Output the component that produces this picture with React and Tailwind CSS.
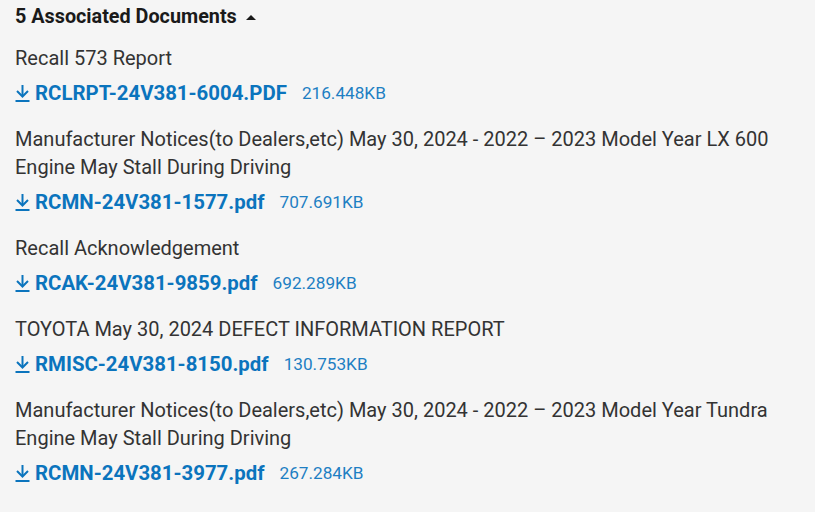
import React from "react";

const docs = [
  { title: "Recall 573 Report", file: "RCLRPT-24V381-6004.PDF", size: "216.448KB" },
  { title: "Manufacturer Notices(to Dealers,etc) May 30, 2024 - 2022 – 2023 Model Year LX 600 Engine May Stall During Driving", file: "RCMN-24V381-1577.pdf", size: "707.691KB" },
  { title: "Recall Acknowledgement", file: "RCAK-24V381-9859.pdf", size: "692.289KB" },
  { title: "TOYOTA May 30, 2024 DEFECT INFORMATION REPORT", file: "RMISC-24V381-8150.pdf", size: "130.753KB" },
  { title: "Manufacturer Notices(to Dealers,etc) May 30, 2024 - 2022 – 2023 Model Year Tundra Engine May Stall During Driving", file: "RCMN-24V381-3977.pdf", size: "267.284KB" },
];

function DownloadIcon() {
  return (
    <svg width="15" height="18" viewBox="0 0 15 18" className="shrink-0" fill="none" stroke="#0b74bd" strokeWidth="2">
      <path d="M7.5 1v11" />
      <path d="M2 7l5.5 5.5L13 7" />
      <path d="M0.5 17h14" />
    </svg>
  );
}

export default function App() {
  return (
    <div className="w-[815px] h-[512px] bg-[#f5f5f5] text-[#333333] overflow-hidden" style={{ fontFamily: "Roboto, sans-serif" }}>
      <div className="pl-[15px] pr-[10px] pt-[6px]">
        <div className="flex items-center gap-[9px] text-[19.8px] font-bold text-[#1a1a1a] leading-[22px]">
          <span>5 Associated Documents</span>
          <svg width="10" height="6" viewBox="0 0 10 6"><path d="M0 6L5 1l5 5z" fill="#1a1a1a" /></svg>
        </div>
        <div className="mt-[16px] flex flex-col gap-[20px]">
          {docs.map((d) => (
            <div key={d.file}>
              <div className="text-[20px] leading-[28px]">{d.title}</div>
              <div className="mt-[9px] flex items-center h-[24px] leading-[24px]">
                <DownloadIcon />
                <span className="ml-[5px] text-[20.4px] font-bold text-[#0b74bd]">{d.file}</span>
                <span className="ml-[15px] text-[17.2px] text-[#1e7fc3]">{d.size}</span>
              </div>
            </div>
          ))}
        </div>
      </div>
    </div>
  );
}
